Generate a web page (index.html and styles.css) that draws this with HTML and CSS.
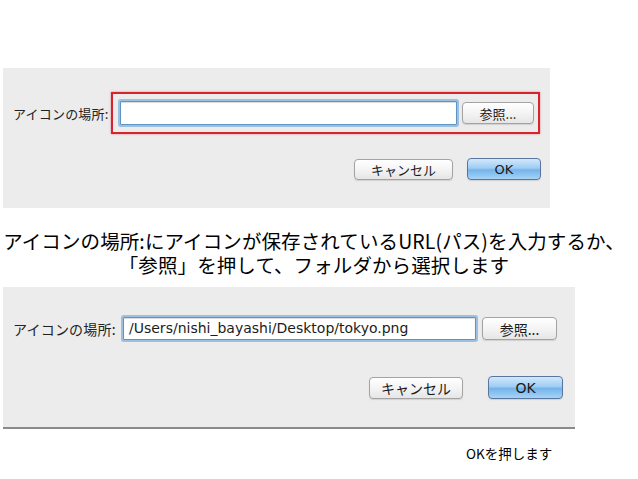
FILE: index.html
```html
<!DOCTYPE html>
<html lang="ja">
<head>
<meta charset="utf-8">
<link rel="stylesheet" href="styles.css">
</head>
<body>
<div class="page">
  <section class="dialog dialog-one">
    <div class="field-row">
      <span class="label">アイコンの場所:</span>
      <div class="highlight">
        <div class="input focus"></div>
        <button class="btn browse">参照...</button>
      </div>
    </div>
    <div class="actions">
      <button class="btn cancel">キャンセル</button>
      <button class="btn ok">OK</button>
    </div>
  </section>

  <p class="caption">アイコンの場所:にアイコンが保存されているURL(パス)を入力するか、<br>「参照」を押して、フォルダから選択します</p>

  <section class="dialog dialog-two">
    <div class="field-row">
      <span class="label">アイコンの場所:</span>
      <div class="input focus filled">/Users/nishi_bayashi/Desktop/tokyo.png</div>
      <button class="btn browse">参照...</button>
    </div>
    <div class="actions">
      <button class="btn cancel">キャンセル</button>
      <button class="btn ok">OK</button>
    </div>
  </section>

  <p class="note">OKを押します</p>
</div>
</body>
</html>
```
FILE: styles.css
```css
* { box-sizing: border-box; }
html, body { margin: 0; padding: 0; background: #ffffff; }
body {
  font-family: "Noto Sans CJK JP", "DejaVu Sans", sans-serif;
  color: #1a1a1a;
}
.page {
  width: 638px;
  height: 479px;
  padding-top: 68px;
  display: flex;
  flex-direction: column;
}
.dialog {
  background: #ececec;
  margin-left: 3px;
  display: flex;
  flex-direction: column;
}
.dialog-one {
  width: 547px;
  height: 140px;
  padding: 24px 9px 0 10px;
}
.dialog-two {
  width: 572px;
  height: 142px;
  padding: 30px 0 0 10px;
  border-bottom: 2px solid #8a8a8a;
}
.field-row {
  display: flex;
  align-items: center;
}
.label {
  font-size: 13px;
  color: #222;
  white-space: nowrap;
  letter-spacing: 0.2px;
}
.dialog-one .label { width: 98px; overflow: hidden; }
.dialog-two .label { width: 110px; font-size: 14px; }
.highlight {
  display: flex;
  align-items: center;
  width: 429px;
  height: 42px;
  border: 2px solid #d7232b;
  padding: 0 4px 0 7px;
  box-shadow: 0 0 2px rgba(200, 30, 40, 0.5);
}
.input {
  background: #fff;
  border: 1px solid #5f93c4;
  box-shadow: 0 0 0 2px #9cc0e2, inset 0 1px 1px rgba(0,0,0,0.15);
  border-radius: 1px;
}
.dialog-one .input { width: 337px; height: 24px; margin: 0 5px 0 0; }
.dialog-two .input {
  width: 353px;
  height: 23px;
  margin-right: 6px;
  font-family: "DejaVu Sans", sans-serif;
  font-size: 14px;
  line-height: 21px;
  padding-left: 5px;
  color: #1c1c1c;
  white-space: nowrap;
  overflow: hidden;
}
.btn {
  font-family: "Noto Sans CJK JP", "DejaVu Sans", sans-serif;
  font-size: 13px;
  color: #1a1a1a;
  border: 1px solid #a3a3a3;
  border-radius: 4px;
  background: linear-gradient(#ffffff, #f4f4f4 50%, #e6e6e6);
  box-shadow: 0 1px 1px rgba(0,0,0,0.12);
  padding: 0;
  line-height: 1;
  display: flex;
  align-items: center;
  justify-content: center;
}
.dialog-one .browse { width: 72px; height: 22px; }
.dialog-two .browse { width: 75px; height: 23px; font-size: 14px; }
.actions {
  display: flex;
  justify-content: flex-end;
  align-items: center;
}
.dialog-one .actions { margin-top: 24px; }
.dialog-one .cancel { width: 99px; height: 21px; margin-right: 14px; }
.dialog-one .ok { width: 74px; height: 22px; }
.dialog-two .actions { margin-top: 36px; padding-right: 12px; }
.dialog-two .cancel { width: 94px; height: 22px; margin-right: 25px; font-size: 14px; }
.dialog-two .ok { width: 75px; height: 23px; font-size: 14px; }
.ok {
  background: linear-gradient(#d3e8fb, #9fcdf3 45%, #74b4ea 55%, #a6d3f6);
  border-color: #5876a0;
  font-family: "DejaVu Sans", sans-serif;
  font-weight: normal;
}
.caption {
  margin: 21px 0 10px;
  font-size: 19.5px;
  line-height: 24px;
  text-align: center;
  color: #000;
  letter-spacing: 0.1px;
  width: 628px;
}
.note {
  margin: 14px 0 0;
  padding-left: 466px;
  font-size: 13.5px;
  color: #000;
}
```
